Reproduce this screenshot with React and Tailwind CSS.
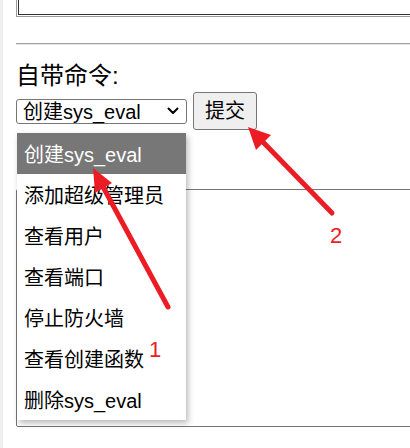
/**
 * Command picker screenshot — select dropdown open, with red annotation arrows.
 */
const options = ["创建sys_eval", "添加超级管理员", "查看用户", "查看端口", "停止防火墙", "查看创建函数", "删除sys_eval"];

export default function App() {
  return (
    <div
      className="relative h-[448px] w-[410px] overflow-hidden bg-white border-l-[3px] border-[#efefef] text-black"
      style={{ fontFamily: '"Liberation Sans", "Noto Sans CJK SC", sans-serif' }}
    >
      <div className="pl-[13px]">
        {/* ── Top box (table, only its bottom shows) ── */}
        <div className="-mt-[10px] h-[27px] w-[420px] border border-[#9a9a9a] p-px">
          <div className="h-full border border-[#333]" />
        </div>

        {/* ── Rule ── */}
        <div className="mt-[26px] w-[420px] border-t border-[#a0a0a0] border-b border-b-[#e4e4e4]" />

        {/* ── Label + controls ── */}
        <p className="mt-[17px] text-[24px] leading-[27px]">自带命令:</p>
        <div className="mt-[3px] flex items-center">
          <div className="flex h-[25px] w-[171px] items-center justify-between rounded-[3px] border border-[#767676] pl-[6px] pr-[7px] text-[20px] leading-none">
            <span className="pt-px">创建sys_eval</span>
            <svg width="12" height="8" viewBox="0 0 12 8" fill="none" stroke="#000" strokeWidth="2" strokeLinecap="round" strokeLinejoin="round">
              <path d="M1.5 1.5 6 6l4.5-4.5" />
            </svg>
          </div>
          <button className="ml-[6px] h-[38px] w-[64px] rounded-[3px] border border-[#767676] bg-[#efefef] text-[20px] leading-none">
            提交
          </button>
        </div>

        {/* ── Output area ── */}
        <div className="mt-[59px] h-[238px] w-[420px] rounded-[2px] border border-[#767676]" />
      </div>

      {/* ── Open dropdown list ── */}
      <ul className="absolute left-[14px] top-[133px] w-[169px] bg-white shadow-[2px_3px_6px_rgba(0,0,0,0.28)] text-[20px]">
        {options.map((o, i) => (
          <li
            key={o}
            className={`flex h-[41px] items-center pl-[7px] pt-[3px] ${i === 0 ? "bg-[#777] text-white" : ""}`}
          >
            {o}
          </li>
        ))}
      </ul>

      {/* ── Annotation arrows ── */}
      <svg className="pointer-events-none absolute left-[-3px] top-0" width="410" height="448">
        <g stroke="#ec1c24" strokeWidth="5" strokeLinecap="round">
          <line x1="168" y1="307" x2="102" y2="185" />
          <line x1="332" y1="213" x2="262" y2="141" />
        </g>
        <polygon points="93,168 112,183 95,193" fill="#ec1c24" />
        <polygon points="248,127 271,135 256,150" fill="#ec1c24" />
      </svg>
      <div className="absolute left-[146px] top-[339px] text-[22px] leading-none text-[#ec1c24]">1</div>
      <div className="absolute left-[327px] top-[225px] text-[22px] leading-none text-[#ec1c24]">2</div>
    </div>
  );
}
